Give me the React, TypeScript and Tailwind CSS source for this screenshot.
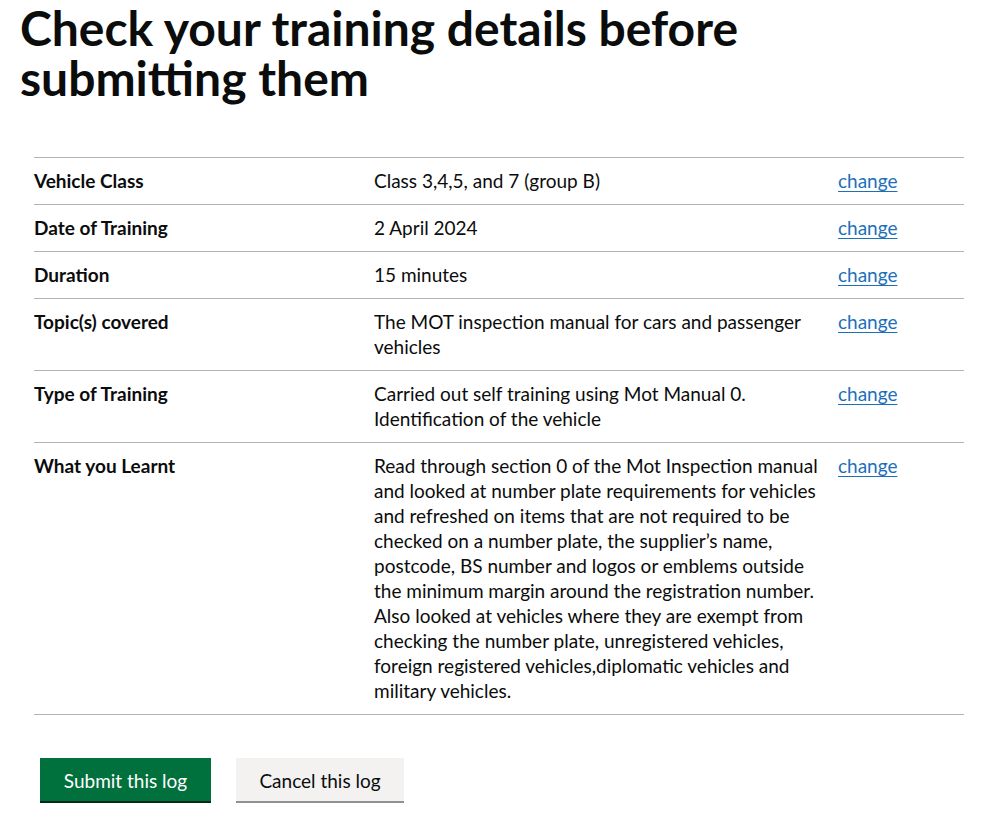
import React from 'react';

const rows = [
  { key: 'Vehicle Class', value: 'Class 3,4,5, and 7 (group B)' },
  { key: 'Date of Training', value: '2 April 2024' },
  { key: 'Duration', value: '15 minutes' },
  { key: 'Topic(s) covered', value: 'The MOT inspection manual for cars and passenger vehicles' },
  { key: 'Type of Training', value: 'Carried out self training using Mot Manual 0. Identification of the vehicle' },
  {
    key: 'What you Learnt',
    value:
      'Read through section 0 of the Mot Inspection manual and looked at number plate requirements for vehicles and refreshed on items that are not required to be checked on a number plate, the supplier\u2019s name, postcode, BS number and logos or emblems outside the minimum margin around the registration number. Also looked at vehicles where they are exempt from checking the number plate, unregistered vehicles, foreign registered vehicles,diplomatic vehicles and military vehicles.',
  },
];

const SummaryRow = ({ label, value }: { label: string; value: string }) => (
  <div className="flex border-b border-[#b1b4b6] pt-[10px] pb-[11px] text-[19px] leading-[25px]">
    <div className="w-[340px] shrink-0 font-bold">{label}</div>
    <div className="w-[464px] shrink-0 pr-[20px]">{value}</div>
    <div className="flex-1">
      <a href="#" className="text-[#1d70b8] underline underline-offset-[3px] decoration-1">
        change
      </a>
    </div>
  </div>
);

export default function App() {
  return (
    <div className="min-h-screen bg-white text-[#0b0c0c]" style={{ fontFamily: 'Lato, "Noto Sans", Arial, sans-serif' }}>
      <h1 className="pl-[20px] pr-[200px] pt-[3px] text-[48px] leading-[50px] font-bold">
        Check your training details before submitting them
      </h1>

      <div className="mx-[34px] mt-[54px] w-[930px] border-t border-[#b1b4b6]">
        {rows.map((row) => (
          <SummaryRow key={row.key} label={row.key} value={row.value} />
        ))}
      </div>

      <div className="flex gap-[25px] pl-[40px] pt-[43px]">
        <button className="h-[43px] w-[171px] bg-[#00703c] pt-[3px] text-[19px] text-white shadow-[0_2px_0_#002d18]">
          Submit this log
        </button>
        <button className="h-[43px] w-[168px] bg-[#f3f2f1] pt-[3px] text-[19px] text-[#0b0c0c] shadow-[0_2px_0_#929191]">
          Cancel this log
        </button>
      </div>
    </div>
  );
}
